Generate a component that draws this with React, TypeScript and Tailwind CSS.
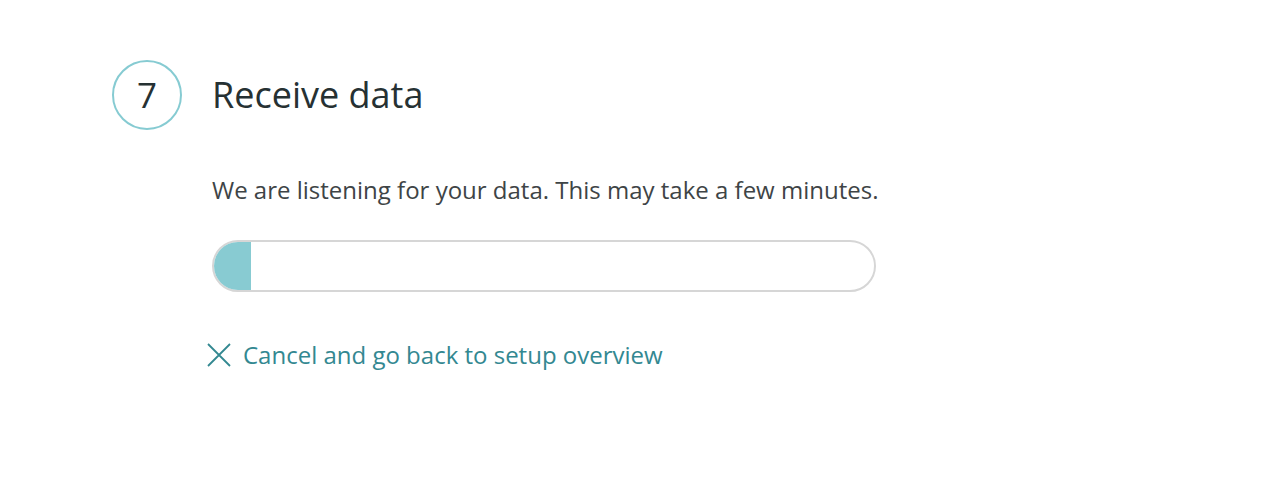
export default function App() {
  return (
    <div className="min-h-[496px] w-full bg-white font-['Open_Sans',sans-serif]">
      <div className="pl-[112px] pt-[60px]">
        {/* Step header */}
        <div className="flex items-center gap-[30px]">
          <div className="flex h-[70px] w-[70px] items-center justify-center rounded-full border-2 border-[#86cbd2] text-[35px] text-[#263133]">
            7
          </div>
          <h1 className="text-[36px] text-[#263133]">Receive data</h1>
        </div>

        {/* Body */}
        <div className="ml-[100px] mt-[44px] w-[664px]">
          <p className="whitespace-nowrap text-[24px] leading-[32px] text-[#3e4446]">
            We are listening for your data. This may take a few minutes.
          </p>

          <div className="mt-[34px] h-[52px] w-full overflow-hidden rounded-full border-2 border-[#d6d6d6] bg-white">
            <div className="h-full w-[37px] bg-[#88cbd2]" />
          </div>

          <button className="-ml-[5px] mt-[47px] flex items-center gap-[12px] text-[24px] leading-[32px] text-[#338891]">
            <svg width="24" height="24" viewBox="0 0 24 24" fill="none" stroke="currentColor" strokeWidth="1.8">
              <path d="M1 1 L23 23 M23 1 L1 23" />
            </svg>
            <span>Cancel and go back to setup overview</span>
          </button>
        </div>
      </div>
    </div>
  );
}
